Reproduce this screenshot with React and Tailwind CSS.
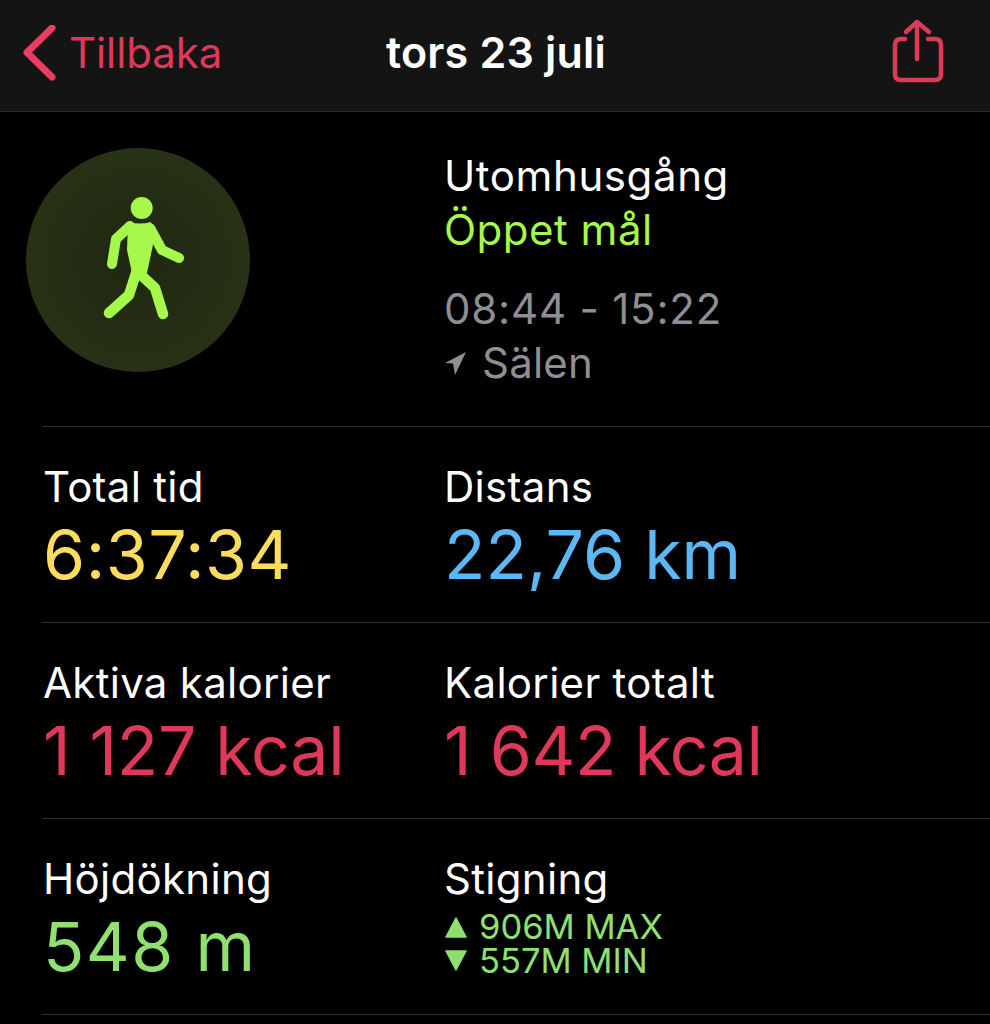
const font = "font-['Inter','Liberation_Sans',sans-serif]"

const rows = [
  [
    { label: "Total tid", value: "6:37:34", color: "text-[#fbdc5c] tracking-[0.5px]" },
    { label: "Distans", value: "22,76 km", color: "text-[#5cb8f5]" },
  ],
  [
    { label: "Aktiva kalorier", value: "1 127 kcal", color: "text-[#e0385a] tracking-[-0.2px]" },
    { label: "Kalorier totalt", value: "1 642 kcal", color: "text-[#e0385a] tracking-[-0.5px]" },
  ],
]

function Stat({ label, value, color }) {
  return (
    <div>
      <div className="h-[50px] text-[42px] leading-[50px] tracking-[0.3px] text-white">{label}</div>
      <div className={`mt-[2px] h-[80px] text-[68px] leading-[80px] ${color}`}>{value}</div>
    </div>
  )
}

function Walker() {
  return (
    <svg viewBox="26 148 224 224" className="h-[224px] w-[224px]">
      <circle cx="141.7" cy="208" r="11" fill="#a6f84a" />
      <path d="M128 222 Q140 225 151 222 L154 240 L147 273 H132 L127 250 Z" fill="#a6f84a" />
      <path
        d="M130 226 L116 239 L112 264 M150 228 L162 250 L179 258"
        fill="none"
        stroke="#a6f84a"
        strokeWidth="10"
        strokeLinecap="round"
        strokeLinejoin="round"
      />
      <path
        d="M137 270 L129 295 L109 313 M140 274 L155 288 L163 314"
        fill="none"
        stroke="#a6f84a"
        strokeWidth="10.5"
        strokeLinecap="round"
        strokeLinejoin="round"
      />
    </svg>
  )
}

export default function App() {
  return (
    <div className={`h-[1024px] w-[990px] overflow-hidden bg-black ${font}`}>
      <header className="relative flex h-[112px] items-center justify-between border-b border-[#2a2a2a] bg-[#141414] pl-[22px] pr-[46px]">
        <div className="-mt-[5px] flex items-center gap-[13px] text-[#e0385a]">
          <svg width="34" height="56" viewBox="0 0 34 56" fill="none" stroke="#ee3b60" strokeWidth="7" strokeLinecap="round" strokeLinejoin="round">
            <path d="M30 3 L5 27.5 L30 52" />
          </svg>
          <span className="text-[42px] leading-[50px] tracking-[-0.1px]">Tillbaka</span>
        </div>
        <div className="absolute left-[386px] top-[27px] text-[43px] font-semibold leading-[50px] tracking-[0.2px] text-white">tors 23 juli</div>
        <svg className="-mt-[10px]" width="52" height="66" viewBox="0 0 52 66" fill="none" stroke="#dc3a58" strokeWidth="4.5" strokeLinecap="round" strokeLinejoin="round">
          <path d="M13 21 H9 Q3 21 3 27 V56 Q3 62 9 62 H43 Q49 62 49 56 V27 Q49 21 43 21 H36" />
          <path d="M25 41 V4 M14 14 L25 4 L37 14" />
        </svg>
      </header>

      <section className="flex h-[314px] pl-[26px] pt-[36px]">
        <div className="flex h-[224px] w-[224px] items-center justify-center rounded-full bg-[radial-gradient(circle,#1f2710,#2c3618)]">
          <Walker />
        </div>
        <div className="ml-[194px] pt-[1px]">
          <div className="h-[54px] text-[42px] leading-[54px] tracking-[0.6px] text-white">Utomhusgång</div>
          <div className="h-[54px] text-[42px] leading-[54px] tracking-[0.5px] text-[#a6f84a]">Öppet mål</div>
          <div className="mt-[25px] h-[54px] text-[42px] leading-[54px] tracking-[0.8px] text-[#8e8e93]">08:44 - 15:22</div>
          <div className="flex h-[54px] items-center gap-[15px] text-[42px] leading-[54px] tracking-[0.2px] text-[#8e8e93]">
            <svg width="23" height="25" viewBox="0 0 23 25" fill="#8e8e93">
              <path d="M22 1 L1 12 L9 12.5 L11 24 Z" />
            </svg>
            <span>Sälen</span>
          </div>
        </div>
      </section>

      {rows.map((row) => (
        <div key={row[0].label} className="ml-[42px] grid h-[196px] grid-cols-[401px_1fr] border-t border-[#2e2e2e] pl-[1px] pt-[35px]">
          <Stat {...row[0]} />
          <Stat {...row[1]} />
        </div>
      ))}

      <div className="ml-[42px] grid h-[197px] grid-cols-[401px_1fr] border-y border-[#2e2e2e] pl-[1px] pt-[35px]">
        <Stat label="Höjdökning" value="548 m" color="text-[#8fe06f] tracking-[1.5px]" />
        <div>
          <div className="h-[50px] text-[42px] leading-[50px] tracking-[0.3px] text-white">Stigning</div>
          <div className="mt-[6px] flex items-center gap-[11px] text-[34.5px] leading-[34px] text-[#8fe06f]">
            <svg width="24" height="22" viewBox="0 0 24 22" fill="#8fe06f">
              <path d="M12 2 L22 21 H2 Z" stroke="#8fe06f" strokeWidth="1.5" strokeLinejoin="round" />
            </svg>
            <span>906M MAX</span>
          </div>
          <div className="flex items-center gap-[11px] text-[34.5px] leading-[34px] text-[#8fe06f]">
            <svg width="24" height="22" viewBox="0 0 24 22" fill="#8fe06f">
              <path d="M2 1 H22 L12 20 Z" stroke="#8fe06f" strokeWidth="1.5" strokeLinejoin="round" />
            </svg>
            <span>557M MIN</span>
          </div>
        </div>
      </div>
    </div>
  )
}
